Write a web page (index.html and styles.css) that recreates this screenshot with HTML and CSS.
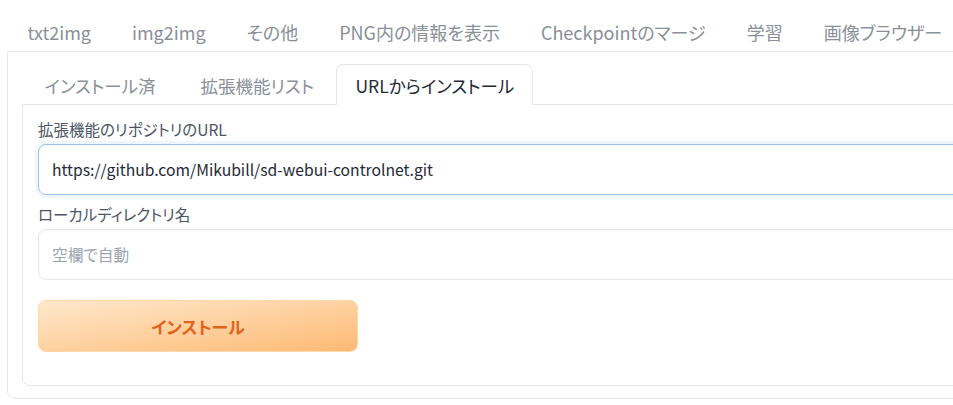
FILE: index.html
```html
<!DOCTYPE html>
<html>
  <head>
    <meta charset="utf-8">
    <title>拡張機能</title>
    <link rel="stylesheet" href="styles.css">
  </head>
  <body>
    <div class="tabs">
      <div class="tab-nav">
        <button class="tab">txt2img</button>
        <button class="tab">img2img</button>
        <button class="tab">その他</button>
        <button class="tab">PNG内の情報を表示</button>
        <button class="tab">Checkpointのマージ</button>
        <button class="tab">学習</button>
        <button class="tab">画像ブラウザー</button>
      </div>
      <div class="panel outer">
        <div class="tab-nav inner-nav">
          <button class="tab sub">インストール済</button>
          <button class="tab sub">拡張機能リスト</button>
          <button class="tab sub selected">URLからインストール</button>
        </div>
        <div class="panel inner">
          <label class="field">
            <span class="label">拡張機能のリポジトリのURL</span>
            <input class="text focused" type="text" value="https://github.com/Mikubill/sd-webui-controlnet.git">
          </label>
          <label class="field">
            <span class="label">ローカルディレクトリ名</span>
            <input class="text" type="text" placeholder="空欄で自動">
          </label>
          <button class="primary">インストール</button>
        </div>
      </div>
    </div>
  </body>
</html>
```

FILE: styles.css
```css
html {
  overflow: hidden;
}
body {
  margin: 0;
  background: #fff;
  font-family: "Noto Sans CJK JP", "Noto Sans", sans-serif;
  font-feature-settings: "palt";
  color: #1f2937;
}
button, input {
  font-family: inherit;
  font-feature-settings: "palt";
}
div.tabs {
  padding-left: 7px;
  width: 1000px;
}
div.tab-nav {
  display: flex;
  height: 51px;
  align-items: flex-end;
}
button.tab {
  background: none;
  border: 1px solid transparent;
  border-bottom: none;
  padding: 0 19.5px;
  height: 40px;
  font-size: 18px;
  color: #8a8f98;
  white-space: nowrap;
}
div.panel {
  border: 1px solid #e5e7eb;
  border-radius: 0 0 8px 8px;
  background: #fff;
}
div.outer {
  height: 348px;
  box-sizing: border-box;
  padding: 0 0 0 14px;
}
div.inner-nav {
  height: 53px;
  margin-bottom: -1px;
}
button.sub {
  font-size: 17.5px;
  padding: 0 21.5px;
}
button.selected {
  color: #1f2937;
  border-color: #e5e7eb;
  border-radius: 7px 7px 0 0;
  background: #fff;
  position: relative;
  z-index: 1;
  height: 41px;
  padding: 0 18px;
}
div.inner {
  height: 282px;
  box-sizing: border-box;
  padding: 12px 0 0 15px;
  display: flex;
  flex-direction: column;
  align-items: flex-start;
}
label.field {
  display: flex;
  flex-direction: column;
  width: 940px;
}
span.label {
  font-size: 15.5px;
  color: #4b5563;
  line-height: 24px;
  margin-bottom: 3px;
}
input.text {
  height: 51px;
  box-sizing: border-box;
  border: 1px solid #e5e7eb;
  border-radius: 8px;
  padding: 0 13px;
  font-size: 15.7px;
  color: #1f2937;
  background: #fff;
  box-shadow: inset 0 1px 3px rgba(0, 0, 0, 0.05);
  outline: none;
  margin-bottom: 7px;
}
input.text::placeholder {
  color: #9ca3af;
}
input.focused {
  border-color: #9cc2ec;
  box-shadow: 0 0 0 3px #f0f6fd, inset 0 1px 2px rgba(0, 0, 0, 0.03);
}
button.primary {
  margin-top: 13px;
  width: 320px;
  height: 52px;
  border: 1px solid #fed7aa;
  border-radius: 8px;
  background: linear-gradient(to bottom right, #ffe8cc, #fdba74);
  color: #e2631c;
  font-size: 17px;
  font-weight: 600;
}
```
